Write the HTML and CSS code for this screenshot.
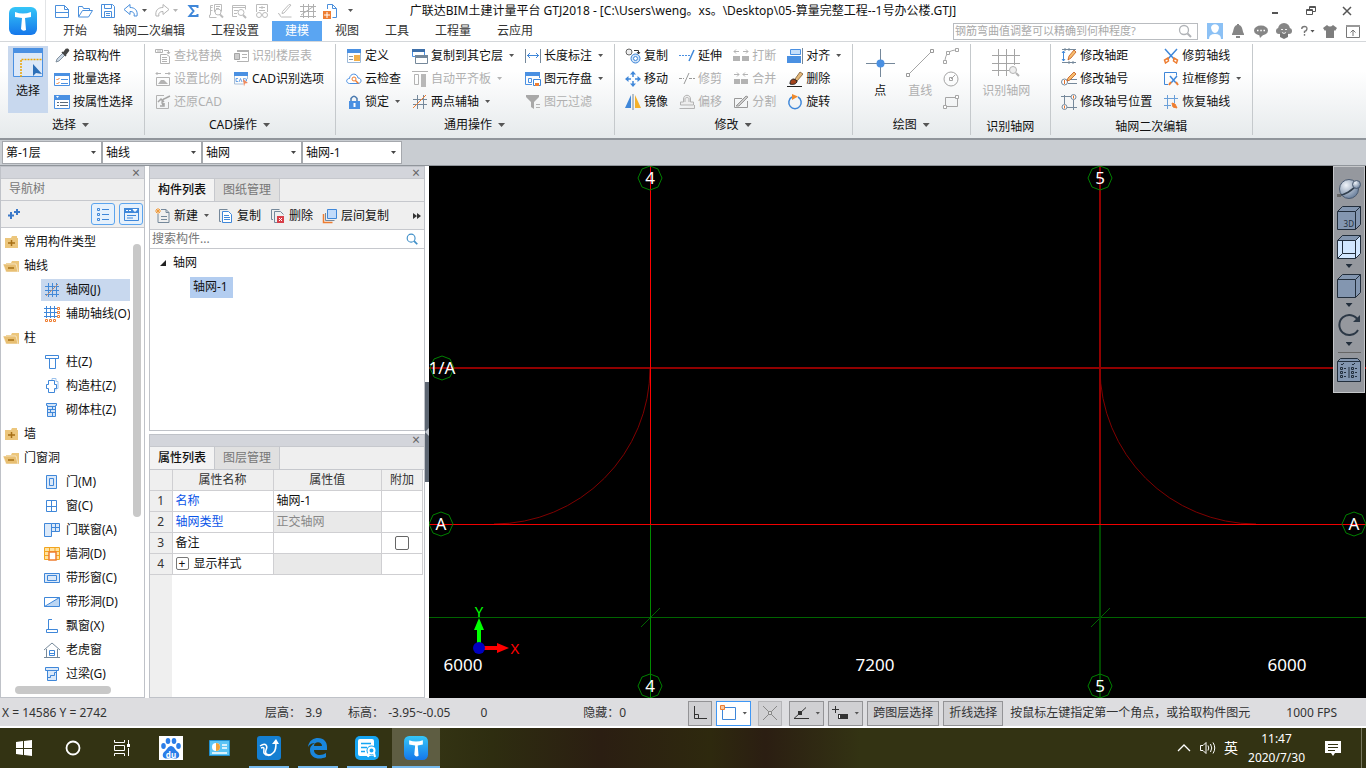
FILE: index.html
```html
<!DOCTYPE html>
<html lang="zh-CN">

<head>
    <meta charset="UTF-8" />
    <meta name="viewport" content="width=device-width, initial-scale=1.0" />
    <title>广联达BIM土建计量平台 GTJ2018</title>
    <link rel="stylesheet" href="styles.css">
</head>

<body>
    <!-- Icon sprite -->
    <svg class="sprite" aria-hidden="true">
        <defs>
            <linearGradient id="logo-fill" x1="0" y1="0" x2="0" y2="1">
                <stop offset="0" stop-color="#35c6f8" />
                <stop offset="1" stop-color="#1577ea" />
            </linearGradient>
            <radialGradient id="ball-fill" cx="0.35" cy="0.3" r="0.8">
                <stop offset="0" stop-color="#f0f4f9" />
                <stop offset="1" stop-color="#5d7493" />
            </radialGradient>
        </defs>
        <!-- quick access -->
        <symbol id="i-new" viewBox="0 0 16 16"><path d="M1.5 2.5h9l4 4v8h-13zM10.5 2.5v4h4M1.5 9.500h13" fill="none" stroke="#4a8fdc" /></symbol>
        <symbol id="i-open" viewBox="0 0 16 16"><path d="M1.5 13.5v-10h4l1 2h6v2M1.5 14l4-6.5h10l-4 6.5z" fill="none" stroke="#4a8fdc" /></symbol>
        <symbol id="i-save" viewBox="0 0 16 16"><path d="M1.5 1.5h11l2 2v11h-13zM4.5 1.5v4h7v-4M4.5 14.5v-6h7v6M6 10.5h4M6 12.5h4" fill="none" stroke="#4a8fdc" /></symbol>
        <symbol id="i-undo" viewBox="0 0 16 16"><path d="M1 6.5l6-5v3c5 0 8 3 7 8.5h-3c1-3-1-4.500-4-4.500v3z" fill="none" stroke="#4a8fdc" /></symbol>
        <symbol id="i-redo" viewBox="0 0 16 16"><path d="M15 6.5l-6-5v3c-5 0-8 3-7 8.5h3c-1-3 1-4.500 4-4.500v3z" fill="none" stroke="#b5b5b5" /></symbol>
        <symbol id="i-sum" viewBox="0 0 16 16"><path d="M12.500 5V3h-8l4 5-4 5h8v-2" fill="none" stroke="#3f87d9" stroke-width="2" /></symbol>
        <symbol id="i-sheet" viewBox="0 0 16 16"><path d="M5 2.500H2.500v9.500h-1v2.500h7M2.500 4.500h2M2.500 7.500h2M6.500 9v-7.500h7v7M8 3.500h4M8 5.500h3" fill="none" stroke="#bcbcbc" /><circle cx="10" cy="9" r="3" fill="none" stroke="#bcbcbc" /><path d="M12 11.500l3 3" stroke="#bcbcbc" stroke-width="2" /></symbol>
        <symbol id="i-find" viewBox="0 0 16 16"><path d="M6 13.500h-4.500v-11h13v4M1.500 4.500h13M3 7.500h4M3 10.500h3" fill="none" stroke="#bcbcbc" /><circle cx="10" cy="9.500" r="3" fill="none" stroke="#bcbcbc" /><path d="M12 12l3 3" stroke="#bcbcbc" stroke-width="2" /></symbol>
        <symbol id="i-glasses" viewBox="0 0 16 16"><path d="M2.500 9v-7.500h11v7.500M5 4.500h6M8 3v3M5 7.500h6" fill="none" stroke="#bcbcbc" /><circle cx="5" cy="12" r="2.500" fill="none" stroke="#bcbcbc" /><circle cx="11" cy="12" r="2.500" fill="none" stroke="#bcbcbc" /></symbol>
        <symbol id="i-brush" viewBox="0 0 16 16"><path d="M14 2l-7 8-2 .5.500-2L12 1.500zM1 10.500c3 0 1 3 3.500 3.500h10" fill="none" stroke="#bcbcbc" /></symbol>
        <symbol id="i-mesh" viewBox="0 0 16 16"><path d="M3.500 1v14M8.500 1v14M13.500 1v14M0 3.500h16M0 8.500h16M0 13.500h16M1 12l13-9" fill="none" stroke="#b0b0b0" /></symbol>
        <symbol id="i-export" viewBox="0 0 16 16"><path d="M4.500 6v-4.500h5l4 4v9h-4M9.500 1.500v4h4" fill="none" stroke="#4a8fdc" /><path d="M0 8h8v8H0z" fill="#ee7d31" /><path d="M4 9v6M1 12h6" stroke="#fff" /></symbol>
        <!-- ribbon: select -->
        <symbol id="i-select" viewBox="0 0 30 30"><path d="M.5.5h29v28H.5z" fill="#dce8f8" stroke="#4a90e2" /><path d="M0 0h30v5H0z" fill="#4a90e2" /><path d="M8 29V11.500h21" fill="none" stroke="#eba400" stroke-width="1.500" stroke-dasharray="2 1" /><path d="M20 16v12l3-3 6 1z" fill="#2d6fb8" /></symbol>
        <symbol id="i-pick" viewBox="0 0 16 16"><path d="M2 14l1-3 6-6 2 2-6 6z" fill="#cbd8e6" stroke="#6b7b8a" stroke-width=".8" /><path d="M8 4l4 4M9.500 5L12 1.500q2-1 2.500 1l-3 4z" fill="#444" stroke="#444" stroke-width="1.500" /></symbol>
        <symbol id="i-batch" viewBox="0 0 16 16"><path d="M.5 2.500h15v12H.5z" fill="#fff" stroke="#4a90e2" /><path d="M0 2h16v3H0z" fill="#4a90e2" /><path d="M2.500 8l1 1 2-2M2.500 12l1 1 2-2" fill="none" stroke="#ee7d31" /><path d="M7 8.500h7M7 12.500h7" stroke="#4a90e2" /></symbol>
        <symbol id="i-prop" viewBox="0 0 16 16"><path d="M.5 1.500h15v13H.5z" fill="#fff" stroke="#4a90e2" /><path d="M0 1h16v5H0z" fill="#4a90e2" /><path d="M2 2h3L3.500 4z" fill="#fff" /><path d="M3 8.500h2M3 11.500h2M6 8.500h8M6 11.500h8" stroke="#5b6b7a" /></symbol>
        <!-- ribbon: CAD -->
        <symbol id="i-replace" viewBox="0 0 16 16"><path d="M.5 1.500h7v3h-7zM3 2v2M5 2v2M9 2.500h4.500v3M12 4l1.500 2L15 4M5.500 6.500h6l3 2v7h-9zM7 9.500h5M7 11.500h5M7 13.500h5" fill="none" stroke="#b3b3b3" /></symbol>
        <symbol id="i-scale" viewBox="0 0 16 16"><path d="M1 2.500h5M10 2.500h5M2.500 1L1 2.500 2.500 4M13.500 1L15 2.500 13.500 4M1.500 6.500h13v8h-13z" fill="none" stroke="#b3b3b3" /><path d="M3 13l3-4h3l4 4z" fill="#b3b3b3" /></symbol>
        <symbol id="i-restore-cad" viewBox="0 0 16 16"><path d="M9 1.500H1.500v13h12V8" fill="none" stroke="#b3b3b3" /><path d="M15 2l-4 2c-4 1-5 4-3 7M3 8l3-3 3 3M9 9v3H5" fill="none" stroke="#a5a5a5" stroke-width="1.500" /></symbol>
        <symbol id="i-floors" viewBox="0 0 16 16"><path d="M4 2.500h11.500v11H4M9 6.500h5M9 9.500h5" fill="none" stroke="#b3b3b3" /><path d="M4 2h12v2H4z" fill="#b3b3b3" /><path d="M1.500 5.500h5v6h-5z" fill="#ccc" stroke="#a5a5a5" /></symbol>
        <symbol id="i-cad" viewBox="0 0 16 16"><path d="M1 1h14v4H1z" fill="#4a90e2" /><path d="M1.500 5v8h9M14.500 5v3" fill="none" stroke="#a9bfd8" /><path d="M5 7.500H3v3h2M6 11l1.500-3.500L9 11M10.500 7.500v3l3-.5v-2z" fill="none" stroke="#4a90e2" stroke-width=".8" /><path d="M10 8l5 4-3 .5-1 3z" fill="#f08a5d" /></symbol>
        <!-- ribbon: common -->
        <symbol id="i-define" viewBox="0 0 16 16"><path d="M1.500 1.500h13v13h-13z" fill="#fff" stroke="#9bb8d8" /><path d="M1 1h14v4H1z" fill="#4a90e2" /><path d="M3 8.500h4M3 11.500h4" stroke="#8898a8" /><path d="M8 7h6v6H8z" fill="#f2b04c" /></symbol>
        <symbol id="i-cloud" viewBox="0 0 16 16"><path d="M3.500 12.500c-4-.5-3.500-5 0-5C4 2 11 1.500 12 7c4 0 4 5.500 0 5.500z" fill="#fff" stroke="#4a90e2" /><circle cx="8" cy="8" r="2" fill="none" stroke="#ee7d31" /><path d="M9.500 9.500l3 3" stroke="#ee7d31" stroke-width="1.500" /></symbol>
        <symbol id="i-lock" viewBox="0 0 16 16"><path d="M5 8V4.500q3-4.500 6 0V8" fill="none" stroke="#4a7ab0" stroke-width="1.500" /><path d="M3 7h11v8H3z" fill="#4a90e2" /><path d="M8.500 9v4" stroke="#fff" stroke-width="2" /></symbol>
        <symbol id="i-copy-floor" viewBox="0 0 16 16"><path d="M.5 1.500h12v7h-12z" fill="#fff" stroke="#4a90e2" /><path d="M0 1h13v3H0z" fill="#3e6fa8" /><path d="M3.500 7.500h12v8h-12z" fill="#fff" stroke="#75889a" /><path d="M3 7h13v3H3z" fill="#75889a" /></symbol>
        <symbol id="i-align-slab" viewBox="0 0 16 16"><path d="M0 .5h16M2.500 3.500h4v10h-4z" fill="none" stroke="#b3b3b3" /><path d="M9 3h5v13H9z" fill="#b8b8b8" /></symbol>
        <symbol id="i-axis" viewBox="0 0 16 16"><path d="M5.500 1v14M11.500 1v14M1 5.500h14M1 10.500h14" stroke="#75889a" /><path d="M1 14L14 1" stroke="#ee7d31" /></symbol>
        <symbol id="i-length" viewBox="0 0 16 16"><path d="M.5 1v14M15.500 1v14" stroke="#75889a" /><path d="M2 7.500h12M5 5L2.500 7.500 5 10M11 5l2.500 2.500L11 10" fill="none" stroke="#3f87d9" /></symbol>
        <symbol id="i-disk" viewBox="0 0 16 16"><path d="M7 13.500H.5v-12h14V7M3.500 7.500h3v4h-3z" fill="none" stroke="#4a90e2" /><path d="M0 1h15v4H0z" fill="#4a90e2" /><path d="M8.500 8.500h7v6h-7z" fill="#fff" stroke="#3f87d9" /><path d="M10 12h4v3h-4z" fill="#ee7d31" /></symbol>
        <symbol id="i-filter" viewBox="0 0 16 16"><path d="M1 1h13v2L9 8v7l-3-2V8L1 3z" fill="#a8a8a8" /><path d="M11 10.500h4M11 13.500h4" stroke="#b3b3b3" /></symbol>
        <!-- ribbon: modify -->
        <symbol id="i-copy2" viewBox="0 0 16 16"><circle cx="4" cy="4" r="3" fill="#eee" stroke="#666" /><circle cx="10.500" cy="10.500" r="4.500" fill="#cfe2f7" stroke="#3f87d9" /><circle cx="10.500" cy="10.500" r="2" fill="#fff" stroke="#3f87d9" /><path d="M9 2.500h4.500V6M12 4l1.500 2L15 4" fill="none" stroke="#333" /></symbol>
        <symbol id="i-move" viewBox="0 0 16 16"><path d="M8 2v4M8 10v4M2 8h4M10 8h4" stroke="#3f87d9" stroke-width="1.500" /><path d="M8 0l3 3.500H5zM8 16l3-3.500H5zM0 8l3.500-3v6zM16 8l-3.500-3v6z" fill="#3f87d9" /></symbol>
        <symbol id="i-mirror" viewBox="0 0 16 16"><path d="M6 1v13H0z" fill="#3f87d9" /><path d="M10 1v13h6z" fill="#f5b12a" /><path d="M8 0v16" stroke="#75889a" /></symbol>
        <symbol id="i-extend" viewBox="0 0 16 16"><path d="M0 7.500h11" stroke="#4a90e2" stroke-dasharray="2 1" /><path d="M15 2l-5 11" stroke="#3f87d9" stroke-width="1.500" /></symbol>
        <symbol id="i-trim" viewBox="0 0 16 16"><path d="M0 7.500h5M10 7.500h6" stroke="#999" stroke-dasharray="3 1" /><path d="M10 2L5 13" stroke="#999" /></symbol>
        <symbol id="i-offset" viewBox="0 0 16 16"><path d="M1.500 11V8h3V5c0-5 7-5 7 0v3h3v3zM.5 14.500h15V11M6 8V5c0-2 4-2 4 0v3" fill="#eee" stroke="#b3b3b3" /></symbol>
        <symbol id="i-break" viewBox="0 0 16 16"><path d="M0 8h7v5H0zM9 8h7v5H9z" fill="#b3b3b3" /><path d="M1 3.500h5M10 3.500h5M3 1.500l-2 2 2 2M13 1.500l2 2-2 2" fill="none" stroke="#b3b3b3" /></symbol>
        <symbol id="i-join" viewBox="0 0 16 16"><path d="M1 8h6v5H1zM8 8h7v5H8z" fill="#b3b3b3" /><path d="M1 3.500h5M10 3.500h5M4 1.500l2 2-2 2M12 1.500l-2 2 2 2" fill="none" stroke="#b3b3b3" /></symbol>
        <symbol id="i-split" viewBox="0 0 16 16"><path d="M9 4.500H1.500v9h13V7" fill="none" stroke="#999" /><path d="M3 12l10-10 2 1-9 9z" fill="#ccc" stroke="#999" /></symbol>
        <symbol id="i-align" viewBox="0 0 16 16"><path d="M3.500 1.500h10v5h-10z" fill="#c5defa" stroke="#4a90e2" /><path d="M0 8h14v7H0z" fill="#4a90e2" /><path d="M15.500 0v16" stroke="#75889a" /></symbol>
        <symbol id="i-delete" viewBox="0 0 16 16"><path d="M8 8l5-7 3 2-6 7z" fill="#e5b878" stroke="#7a5a35" stroke-width=".8" /><path d="M3 13c0-4 2-5 4-5l3 2c0 3-4 4-7 3z" fill="#a4441c" stroke="#222" /><path d="M0 15.500h15" stroke="#222" /></symbol>
        <symbol id="i-rotate" viewBox="0 0 16 16"><path d="M11 3a6.200 6.200 0 1 1-6 0" fill="none" stroke="#3f87d9" stroke-width="1.500" /><path d="M5 0l6 2.500L5 6z" fill="#ee8a2d" /></symbol>
        <!-- ribbon: draw -->
        <symbol id="i-point" viewBox="0 0 30 30"><path d="M15.500 1v28M1 15.500h29" stroke="#75889a" /><circle cx="15.500" cy="15.500" r="4" fill="#4a90e2" /></symbol>
        <symbol id="i-line" viewBox="0 0 30 30"><path d="M4 26L26 4" stroke="#a5a5a5" /><path d="M1.500 25.500h3v3h-3zM25.500 1.500h3v3h-3z" fill="#fff" stroke="#999" /></symbol>
        <symbol id="i-arc" viewBox="0 0 16 16"><path d="M2 14C2 6 6 2 14 2" fill="none" stroke="#a5a5a5" /><path d="M.5 12.500h3v3h-3zM3.500 3.500h3v3h-3zM12.500.5h3v3h-3z" fill="#fff" stroke="#a5a5a5" /></symbol>
        <symbol id="i-circle" viewBox="0 0 16 16"><circle cx="8" cy="8" r="7" fill="none" stroke="#a5a5a5" /><path d="M8 8l4-4M6.500 6.500h3v3h-3z" fill="#fff" stroke="#a5a5a5" /></symbol>
        <symbol id="i-rect" viewBox="0 0 16 16"><path d="M2.500 3.500h12v9h-12z" fill="none" stroke="#a5a5a5" /><path d="M.5 11.500h3v3h-3zM12.500 1.500h3v3h-3z" fill="#fff" stroke="#a5a5a5" /></symbol>
        <symbol id="i-grid-find" viewBox="0 0 30 30"><path d="M7.500 1v27M15.500 1v27M23.500 1v16M1 7.500h28M1 15.500h28M1 22.500h17" stroke="#a5a5a5" /><circle cx="22" cy="22" r="3.500" fill="#eee" stroke="#b3b3b3" /><path d="M25 25l3 3" stroke="#b3b3b3" stroke-width="2" /></symbol>
        <!-- ribbon: axis edit -->
        <symbol id="i-ax-dist" viewBox="0 0 16 16"><path d="M1 1.500h14M4 0v3M8 0v3M1 14.500h14M8 13v3M12 13v3" stroke="#75889a" /><path d="M2.500 3v10M1 5l1.500-2L4 5M1 11l1.500 2L4 11" fill="none" stroke="#3f87d9" /><path d="M7 12l1-4 5-6 2 2-5 6z" fill="#f7bd6d" stroke="#c2571a" stroke-width=".8" /></symbol>
        <symbol id="i-ax-no" viewBox="0 0 16 16"><circle cx="3.500" cy="11" r="3" fill="#fff" stroke="#75889a" /><path d="M7 8.500h9M7 12.500h9" stroke="#75889a" /><path d="M3.500 9v4" stroke="#e2702c" /><path d="M6 10l1-3 6-6 2 2-6 6z" fill="#f7bd6d" stroke="#c2571a" stroke-width=".8" /></symbol>
        <symbol id="i-ax-pos" viewBox="0 0 16 16"><path d="M3.500 1v9M0 2.500h10M12.500 6v10M6 13.500h10" stroke="#75889a" /><circle cx="12.500" cy="3" r="2.500" fill="#fff" stroke="#75889a" /><circle cx="3.500" cy="13" r="2.500" fill="#fff" stroke="#75889a" /><path d="M12.500 1.500v3M3.500 11.500v3" stroke="#e2702c" /></symbol>
        <symbol id="i-cut" viewBox="0 0 16 16"><path d="M2 1l9 10M14 1L5 11" stroke="#3f87d9" stroke-width="1.500" /><path d="M5 10l-3.500 2 1 3 3-2zM11 10l3.500 2-1 3-3-2z" fill="#fff" stroke="#ee7d31" stroke-width="1.500" /></symbol>
        <symbol id="i-box-cut" viewBox="0 0 16 16"><path d="M5 13.500H1.500v-12h12v3" fill="none" stroke="#3f87d9" /><path d="M7 5l6 7M14 5l-6 7" stroke="#3f87d9" stroke-width="1.500" /><path d="M8 11l-2 3M13 11l2 3" stroke="#ee7d31" stroke-width="2" /></symbol>
        <symbol id="i-ax-back" viewBox="0 0 16 16"><path d="M4.500 1v14M11.500 1v8M1 4.500h14M1 11.500h7" stroke="#6a9fd8" /><path d="M9 9l3 1 2 4-4-1z" fill="#ee7d31" stroke="#ee7d31" /></symbol>
        <!-- header right -->
        <symbol id="i-search" viewBox="0 0 16 16"><circle cx="7" cy="7" r="4.500" fill="none" stroke="currentColor" stroke-width="1.300" /><path d="M10.500 10.500L14 14" stroke="currentColor" stroke-width="2" /></symbol>
        <symbol id="i-avatar" viewBox="0 0 16 16"><path d="M0 0h16v16H0z" fill="#8cc1f5" /><path d="M4 5c0-5 8-5 8 0l-1 3q-3 4-6 0zM2 16q0-5 6-5t6 5z" fill="#fff" /></symbol>
        <symbol id="i-bell" viewBox="0 0 16 16"><path d="M7 1h2v1c4 1 3 6 5 9v1H2v-1c2-3 1-8 5-9zM6 13h4v2H6z" fill="#868686" /></symbol>
        <symbol id="i-chat" viewBox="0 0 16 16"><ellipse cx="8" cy="7.500" rx="7" ry="5" fill="#868686" /><path d="M6 11l1 4 4-4z" fill="#868686" /><path d="M4 7.500h1.500M7.300 7.500h1.500M10.500 7.500H12" stroke="#fff" stroke-width="1.500" /></symbol>
        <symbol id="i-face" viewBox="0 0 16 16"><circle cx="8" cy="6" r="6" fill="#868686" /><circle cx="3" cy="8" r="3" fill="#868686" /><circle cx="13" cy="8" r="3" fill="#868686" /><path d="M4 10h8v4l-4 2-4-2z" fill="#777" /><path d="M5 6.500h2M9 6.500h2M6 9.500q2 2 4 0" fill="none" stroke="#eee" /></symbol>
        <symbol id="i-help" viewBox="0 0 16 16"><path d="M4 5q0-3.500 4-3.500t3.500 3.500T8 8.500V11M8 12.500V15" fill="none" stroke="#777" stroke-width="2" /></symbol>
        <symbol id="i-shirt" viewBox="0 0 16 16"><path d="M5 2q3 3 6 0l4 3-2 3-1-1v8H4V7L3 8 1 5z" fill="#7e7e7e" /></symbol>
        <symbol id="i-pin" viewBox="0 0 16 16"><path d="M1.500 2.500h13v12h-13z" fill="none" stroke="#777" /><path d="M1 2h14v2H1z" fill="#999" /><path d="M8 13V7M5.500 9.500L8 7l2.500 2.500" fill="none" stroke="#777" /></symbol>
        <!-- tree -->
        <symbol id="i-folder" viewBox="0 0 16 16"><path d="M2 4h6l1-2h5v2h1v10H2z" fill="#ecc67c" /><path d="M8.500 6v6M5 9h7" stroke="#a66f16" stroke-width="1.500" /></symbol>
        <symbol id="i-folder-open" viewBox="0 0 16 16"><path d="M3 5h5l1-2h7v11H3z" fill="#ecc67c" /><path d="M0 6h13l2 8H3z" fill="#e8bf72" stroke="#fff" stroke-width=".5" /><path d="M5 10h6" stroke="#a66f16" stroke-width="1.500" /></symbol>
        <symbol id="i-grid" viewBox="0 0 16 16"><path d="M4.500 1v14M8.500 1v14M12.500 1v14M1 4.500h14M1 8.500h14M1 12.500h14" stroke="#4389d8" /><path d="M2 14L14 2" stroke="#b98a70" /></symbol>
        <symbol id="i-grid-aux" viewBox="0 0 16 16"><path d="M2.500 0v12M6.500 0v12M10.500 0v12M0 2.500h13M0 6.500h13M0 10.500h13" stroke="#3f87d9" /><path d="M1.500 13.500h2v2h-2zM5.500 13.500h2v2h-2zM9.500 13.500h2v2h-2zM13.500 1.500h2v2h-2zM13.500 5.500h2v2h-2zM13.500 9.500h2v2h-2z" fill="#fff" stroke="#ee7d31" /></symbol>
        <symbol id="i-column" viewBox="0 0 16 16"><path d="M1.500 1.500h13v3h-3v10h-6v-10h-4zM1.500 4.500h13" fill="#fff" stroke="#3f87d9" /></symbol>
        <symbol id="i-column-c" viewBox="0 0 16 16"><path d="M8 2V.5h4v3h2v7h-2v2" fill="none" stroke="#9cc2ec" /><path d="M4.500 2.500h6v4h2v4h-2v4h-6v-4h-2v-4h2z" fill="#fff" stroke="#3f87d9" /></symbol>
        <symbol id="i-column-b" viewBox="0 0 16 16"><path d="M2.500 1.500h10v2h-1v11h-8v-11h-1z" fill="#d5e5f8" stroke="#3f87d9" /><path d="M4 4.500h7M4 7.500h7M4 10.500h7M8.500 5v2M6.500 8v2M8.500 11v3" stroke="#3f87d9" /></symbol>
        <symbol id="i-door" viewBox="0 0 16 16"><path d="M2.500 1.500h10v13h-10zM5.500 4.500h4v7h-4z" fill="#dbe9f9" stroke="#3f87d9" /></symbol>
        <symbol id="i-window" viewBox="0 0 16 16"><path d="M2.500 2.500h10v11h-10zM7.500 2.500v11M2.500 8.500h10" fill="#fff" stroke="#3f87d9" /></symbol>
        <symbol id="i-door-win" viewBox="0 0 16 16"><path d="M.5 1.500h7v13h-7zM7.500 1.500h8v8h-8M11.500 1.500v8M7.500 5.500h8" fill="#dbe9f9" stroke="#3f87d9" /></symbol>
        <symbol id="i-hole" viewBox="0 0 16 16"><path d="M.5 1.500h15v12H.5z" fill="#ffe2a0" stroke="#f2a51f" /><path d="M0 5.500h16M5.500 1v4M11 1v4M0 9.500h5M11 9.500h5" stroke="#f2a51f" /><path d="M5 6h7v8H5z" fill="#fff" stroke="#ee7d31" stroke-width="1.500" /></symbol>
        <symbol id="i-strip-win" viewBox="0 0 16 16"><path d="M.5 3.500h15v9H.5zM3.500 5.500h9v5h-9z" fill="#dbe9f9" stroke="#3f87d9" /></symbol>
        <symbol id="i-strip-hole" viewBox="0 0 16 16"><path d="M15 3v10H1z" fill="#bcd6f3" /><path d="M.5 3.500h15v9H.5zM.5 12.500l15-9" fill="none" stroke="#3f87d9" /></symbol>
        <symbol id="i-bay" viewBox="0 0 16 16"><path d="M8 1.500H4.500v10M2.500 11.500h11v3h-11z" fill="#fff" stroke="#3f87d9" /></symbol>
        <symbol id="i-dormer" viewBox="0 0 16 16"><path d="M0 8L8 1l8 7M2.500 7v8M13.500 7v8M0 15.500h16" fill="none" stroke="#75889a" /><path d="M5.500 8.500h5v5h-5zM5.500 11.500h5" fill="none" stroke="#3f87d9" /></symbol>
        <symbol id="i-lintel" viewBox="0 0 16 16"><path d="M1.500 1.500h13v3h-13zM3.500 4.500v10h9v-10M3.500 11.500h3v-2h4v-3h2" fill="#dbe9f9" stroke="#3f87d9" /></symbol>
        <!-- component panel -->
        <symbol id="i-add-item" viewBox="0 0 16 16"><path d="M6 1.500h5l3 3v10H3V6M11 1.500v3h3M6 8.500h6M6 11.500h6" fill="none" stroke="#75889a" /><path d="M3 0v6M0 3h6M1 1l4 4M5 1L1 5" stroke="#f09a3a" /></symbol>
        <symbol id="i-copy-item" viewBox="0 0 16 16"><path d="M3 13.500H1.500v-12h8" fill="none" stroke="#75889a" /><path d="M4.500 3.500h6l3 3v8h-9zM6 7.500h5M6 9.500h6M6 11.500h6" fill="#fff" stroke="#3f87d9" /></symbol>
        <symbol id="i-del-item" viewBox="0 0 16 16"><path d="M3 11.500H1.500v-10h8M7 14.500H4.500v-11h6l3 3" fill="none" stroke="#75889a" /><path d="M7 8h7v7H7z" fill="#d8404a" /><path d="M9 10l3 3M12 10l-3 3" stroke="#fff" /></symbol>
        <symbol id="i-layer-copy" viewBox="0 0 16 16"><path d="M1.500 6v8.500h9" fill="none" stroke="#ee7d31" stroke-width="1.500" /><path d="M3.500 5v7.500h9" fill="none" stroke="#75889a" /><path d="M5.500 1.500h9v9h-9z" fill="#c2dbfa" stroke="#3f87d9" /></symbol>
        <symbol id="i-plus2" viewBox="0 0 16 16"><path d="M5 6v7M2 9.500h6M11 3v6M8 6h6" stroke="#3a78c8" stroke-width="2" /></symbol>
        <symbol id="i-view-list" viewBox="0 0 16 16"><path d="M2.500 2.500h2v2h-2zM2.500 7.500h2v2h-2zM2.500 12.500h2v2h-2zM7 3.500h7M7 8.500h7M7 13.500h7" fill="none" stroke="#3f87d9" /></symbol>
        <symbol id="i-view-card" viewBox="0 0 16 16"><path d="M1.500 2.500h14v12h-14zM4 9.500h9M4 12h6" fill="none" stroke="#3f87d9" /><path d="M1 2h15v5H1z" fill="#3f87d9" /><path d="M3 4.500h2M6 4.500h2M10 3.500h4l-2 2z" stroke="#fff" fill="#fff" /></symbol>
        <!-- view cube -->
        <symbol id="i-orbit" viewBox="0 0 24 24"><circle cx="12" cy="12" r="9.500" fill="url(#ball-fill)" stroke="#4a5a70" /><path d="M1 18c5 1 15-4 21-13" fill="none" stroke="#33404f" stroke-width="1.500" /><circle cx="19.500" cy="7.500" r="4" fill="url(#ball-fill)" stroke="#4a5a70" /><path d="M0 17h4v3H0z" fill="#666" /></symbol>
        <symbol id="i-cube" viewBox="0 0 24 24"><path d="M.5 5.500l5-5h18v18l-5 5H.5zM.5 5.500h18v18M18.500 5.500l5-5" fill="#8396b0" stroke="#222e3c" /></symbol>
        <symbol id="i-cube-wire" viewBox="0 0 24 24"><path d="M.5 5.500l5-5h18v18l-5 5H.5z" fill="#d2e7ff" stroke="#222e3c" /><path d="M.5 5.500l5-5h18l-5 5z" fill="#8396b0" stroke="#222e3c" /><path d="M18.500 5.500v18M5.500 5.500v13h13M5.500 18.500l-5 5" fill="none" stroke="#222e3c" /></symbol>
        <symbol id="i-spin" viewBox="0 0 24 24"><path d="M21 17a10 10 0 1 1 0-10" fill="none" stroke="#2c3846" stroke-width="2" /><path d="M23 2v7h-7z" fill="#2c3846" /></symbol>
        <symbol id="i-options" viewBox="0 0 24 24"><path d="M.5 3.500l3-3h17l3 3v20H.5zM.5 3.500h23M12 9v11" fill="#8396b0" stroke="#222e3c" /><path d="M4 6l1 1 2-2M15 6l1 1 2-2M3.500 9.500h2v2h-2zM3.500 13.500h2v2h-2zM3.500 17.500h2v2h-2zM14.500 9.500h2v2h-2zM14.500 13.500h2v2h-2zM14.500 17.500h2v2h-2zM7 10.500h2M7 14.500h2M7 18.500h2M18 10.500h2M18 14.500h2M18 18.500h2" fill="none" stroke="#222e3c" /></symbol>
        <!-- status bar -->
        <symbol id="i-ortho" viewBox="0 0 16 16"><path d="M2.500 1v12.500H15M2.500 9.500h4v4" fill="none" stroke="#333" /></symbol>
        <symbol id="i-snap-rect" viewBox="0 0 16 16"><path d="M2.500 2.500h13v12h-13z" fill="none" stroke="#3f87d9" /><path d="M.5.5h4v4h-4z" fill="#f9c79c" stroke="#ee7d31" /></symbol>
        <symbol id="i-cross" viewBox="0 0 16 16"><path d="M1 1l14 14M15 1L1 15" stroke="#888" /><path d="M6.500 6.500h3v3h-3z" fill="#ddd" stroke="#888" /></symbol>
        <symbol id="i-angle" viewBox="0 0 16 16"><path d="M1 13.500h15M1 13.500L13 2.500" stroke="#333" /><path d="M5 6h4v4H5z" fill="#333" /></symbol>
        <symbol id="i-input" viewBox="0 0 16 16"><path d="M3.500 1v7M0 4.500h7" stroke="#333" /><path d="M6 9h10v5H6z" fill="#333" /><path d="M7.500 10v3" stroke="#fff" /></symbol>
        <!-- taskbar -->
        <symbol id="i-win" viewBox="0 0 16 16"><path d="M0 2l7-1v7H0zM8 1l8-1v8H8zM0 9h7v6l-7-1zM8 9h8v7l-8-1z" fill="#fff" /></symbol>
        <symbol id="i-cortana" viewBox="0 0 16 16"><circle cx="8" cy="8" r="6.500" fill="none" stroke="#fff" stroke-width="1.800" /></symbol>
        <symbol id="i-taskview" viewBox="0 0 16 16"><path d="M.5 0v2.500h10V0M.5 16v-2.500h10V16M.5 5.500h10v5H.5zM14.500 0v4M14.500 8v8" fill="none" stroke="#fff" /><path d="M13 4h3v3h-3z" fill="#fff" /></symbol>
        <symbol id="i-baidu" viewBox="0 0 24 24"><path d="M0 0h24v24H0z" fill="#fff" /><ellipse cx="4.500" cy="10" rx="2.300" ry="3" fill="#2a7de8" /><ellipse cx="9" cy="5" rx="2.300" ry="3" fill="#2a7de8" /><ellipse cx="15" cy="5" rx="2.300" ry="3" fill="#2a7de8" /><ellipse cx="19.500" cy="10" rx="2.300" ry="3" fill="#2a7de8" /><path d="M12 10c3 0 4 4 7 6 3 4 0 7-3 6.500q-4-1-8 0C5 23 2 20 5 16c3-2 4-6 7-6z" fill="#2a7de8" /></symbol>
        <symbol id="i-card" viewBox="0 0 24 24"><path d="M1.500 4.500h20v15h-20z" fill="#5cc4f5" stroke="#1f8fd0" /><circle cx="8" cy="11" r="4" fill="#fff" /><path d="M8 11V7a4 4 0 0 1 0 8z" fill="#f0a33a" /><path d="M14 9h5M14 12h5M4 17h15" stroke="#fff" stroke-width="1.500" /></symbol>
        <symbol id="i-swirl" viewBox="0 0 24 24"><rect width="24" height="24" rx="3" fill="#147fd2" /><path d="M3 10c6-4 8 0 6 4-2 5 4 6 7 3 3-2 3-6 3-11M4 12c5-2 2 3 3 5 2 3 6 3 8 1" fill="none" stroke="#fff" stroke-width="1.500" /><path d="M15 8l4-5 3 5z" fill="#fff" /></symbol>
        <symbol id="i-edge" viewBox="0 0 24 24"><path d="M2 11C3 4 8 2 12 2c6 0 9 4 9 9v3H8c0 6 8 6 12 3v4C14 24 4 23 4 14c0-4 3-6 5-7-5 0-6 3-7 4zm6-1h8c0-5-8-5-8 0z" fill="#1a86dc" /></symbol>
        <symbol id="i-cert" viewBox="0 0 24 24"><rect width="24" height="24" rx="5" fill="#16a5f3" /><rect x="3" y="3" width="16" height="17" rx="2" fill="#fff" /><path d="M6 7.500h10M6 11.500h6M6 15.500h4" stroke="#16a5f3" stroke-width="1.500" /><circle cx="16.500" cy="14.500" r="5" fill="#16a5f3" /><circle cx="16.500" cy="14.500" r="3" fill="none" stroke="#fff" stroke-width="2" /><path d="M14 17l-1 4M19 17l1 4" stroke="#fff" stroke-width="2" /></symbol>
        <symbol id="i-logo" viewBox="0 0 28 28"><rect width="28" height="28" rx="6" fill="url(#logo-fill)" /><path d="M6 5q8 3 16 0v5l-6 1 1 12q-3 2-5-1l1-11-7-1z" fill="#fff" /></symbol>
        <symbol id="i-up" viewBox="0 0 16 16"><path d="M2 11l6-6 6 6" fill="none" stroke="#fff" stroke-width="1.300" /></symbol>
        <symbol id="i-sound" viewBox="0 0 16 16"><path d="M.5 5.500H3l3-3v11l-3-3H.5zM8 5.500q1.500 2.500 0 5M10.500 4q2.500 4 0 8M13 2.500q3.500 5.500 0 11" fill="none" stroke="#fff" /></symbol>
        <symbol id="i-note" viewBox="0 0 16 16"><path d="M0 1h16v12h-6l-2 3-2-3H0z" fill="#fff" /><path d="M3 4.500h10M3 7.500h10M3 10.500h7" stroke="#333313" /></symbol>
    </svg>

    <header class="header">
        <div class="titlebar">
            <div class="quick">
                <button title="新建"><svg class="ico"><use href="#i-new" /></svg></button>
                <button title="打开"><svg class="ico"><use href="#i-open" /></svg></button>
                <button title="保存"><svg class="ico"><use href="#i-save" /></svg></button>
                <button title="撤销"><svg class="ico"><use href="#i-undo" /></svg><i class="arrow"></i></button>
                <button title="恢复" class="off"><svg class="ico"><use href="#i-redo" /></svg><i class="arrow"></i></button>
                <button title="汇总计算"><svg class="ico"><use href="#i-sum" /></svg></button>
                <button title="查看工程量"><svg class="ico"><use href="#i-sheet" /></svg></button>
                <button title="查看计算式"><svg class="ico"><use href="#i-find" /></svg></button>
                <button title="查看报表"><svg class="ico"><use href="#i-glasses" /></svg></button>
                <button title="编辑"><svg class="ico"><use href="#i-brush" /></svg></button>
                <button title="钢筋三维"><svg class="ico"><use href="#i-mesh" /></svg></button>
                <button title="导出"><svg class="ico"><use href="#i-export" /></svg></button>
                <button title="自定义" class="customize"><i class="arrow"></i></button>
            </div>
            <h1>广联达BIM土建计量平台 GTJ2018 - [C:\Users\weng。xs。\Desktop\05-算量完整工程--1号办公楼.GTJ]</h1>
            <div class="win-btns">
                <button title="最小化"><svg viewBox="0 0 12 12"><path d="M3 8h6" stroke="#555" stroke-width="2" /></svg></button>
                <button title="还原"><svg viewBox="0 0 12 12"><path d="M1.500 4.500h6v5h-6zM4.500 4V1.500h6v5H8M1.500 5.500h6M4.500 2.500h6" fill="none" stroke="#555" /></svg></button>
                <button title="关闭"><svg viewBox="0 0 12 12"><path d="M2 2l8 8M10 2l-8 8" stroke="#555" stroke-width="1.500" /></svg></button>
            </div>
        </div>
        <button class="logo" title="菜单"><svg><use href="#i-logo" /></svg></button>
        <div class="tabbar">
            <nav class="tabs">
                <a href="#">开始</a>
                <a href="#">轴网二次编辑</a>
                <a href="#">工程设置</a>
                <a href="#" class="active">建模</a>
                <a href="#">视图</a>
                <a href="#">工具</a>
                <a href="#">工程量</a>
                <a href="#">云应用</a>
            </nav>
            <div class="help-search">
                <input type="text" aria-label="搜索帮助" placeholder="钢筋弯曲值调整可以精确到何种程度?">
                <svg class="ico"><use href="#i-search" /></svg>
            </div>
            <div class="user-btns">
                <button title="用户"><svg class="ico"><use href="#i-avatar" /></svg></button>
                <button title="通知"><svg class="ico"><use href="#i-bell" /></svg></button>
                <button title="消息"><svg class="ico"><use href="#i-chat" /></svg></button>
                <button title="客服"><svg class="ico"><use href="#i-face" /></svg></button>
                <button title="帮助" class="help"><svg class="ico"><use href="#i-help" /></svg><i class="arrow"></i></button>
                <button title="皮肤"><svg class="ico"><use href="#i-shirt" /></svg></button>
                <button title="折叠"><svg class="ico"><use href="#i-pin" /></svg></button>
            </div>
        </div>
    </header>

    <!-- Ribbon -->
    <div class="ribbon">
        <section class="group">
            <div class="cols">
                <button class="big active"><svg><use href="#i-select" /></svg>选择</button>
                <div class="col">
                    <button><svg class="ico"><use href="#i-pick" /></svg>拾取构件</button>
                    <button><svg class="ico"><use href="#i-batch" /></svg>批量选择</button>
                    <button><svg class="ico"><use href="#i-prop" /></svg>按属性选择</button>
                </div>
            </div>
            <button class="group-name">选择<i class="arrow wide"></i></button>
        </section>
        <section class="group">
            <div class="cols">
                <div class="col">
                    <button disabled><svg class="ico"><use href="#i-replace" /></svg>查找替换</button>
                    <button disabled><svg class="ico"><use href="#i-scale" /></svg>设置比例</button>
                    <button disabled><svg class="ico"><use href="#i-restore-cad" /></svg>还原CAD</button>
                </div>
                <div class="col">
                    <button disabled><svg class="ico"><use href="#i-floors" /></svg>识别楼层表</button>
                    <button><svg class="ico"><use href="#i-cad" /></svg>CAD识别选项</button>
                </div>
            </div>
            <button class="group-name">CAD操作<i class="arrow wide"></i></button>
        </section>
        <section class="group">
            <div class="cols">
                <div class="col">
                    <button><svg class="ico"><use href="#i-define" /></svg>定义</button>
                    <button><svg class="ico"><use href="#i-cloud" /></svg>云检查</button>
                    <button><svg class="ico"><use href="#i-lock" /></svg>锁定<i class="arrow"></i></button>
                </div>
                <div class="col">
                    <button><svg class="ico"><use href="#i-copy-floor" /></svg>复制到其它层<i class="arrow"></i></button>
                    <button disabled><svg class="ico"><use href="#i-align-slab" /></svg>自动平齐板<i class="arrow"></i></button>
                    <button><svg class="ico"><use href="#i-axis" /></svg>两点辅轴<i class="arrow"></i></button>
                </div>
                <div class="col">
                    <button><svg class="ico"><use href="#i-length" /></svg>长度标注<i class="arrow"></i></button>
                    <button><svg class="ico"><use href="#i-disk" /></svg>图元存盘<i class="arrow"></i></button>
                    <button disabled><svg class="ico"><use href="#i-filter" /></svg>图元过滤</button>
                </div>
            </div>
            <button class="group-name">通用操作<i class="arrow wide"></i></button>
        </section>
        <section class="group">
            <div class="cols">
                <div class="col">
                    <button><svg class="ico"><use href="#i-copy2" /></svg>复制</button>
                    <button><svg class="ico"><use href="#i-move" /></svg>移动</button>
                    <button><svg class="ico"><use href="#i-mirror" /></svg>镜像</button>
                </div>
                <div class="col">
                    <button><svg class="ico"><use href="#i-extend" /></svg>延伸</button>
                    <button disabled><svg class="ico"><use href="#i-trim" /></svg>修剪</button>
                    <button disabled><svg class="ico"><use href="#i-offset" /></svg>偏移</button>
                </div>
                <div class="col">
                    <button disabled><svg class="ico"><use href="#i-break" /></svg>打断</button>
                    <button disabled><svg class="ico"><use href="#i-join" /></svg>合并</button>
                    <button disabled><svg class="ico"><use href="#i-split" /></svg>分割</button>
                </div>
                <div class="col">
                    <button><svg class="ico"><use href="#i-align" /></svg>对齐<i class="arrow"></i></button>
                    <button><svg class="ico"><use href="#i-delete" /></svg>删除</button>
                    <button><svg class="ico"><use href="#i-rotate" /></svg>旋转</button>
                </div>
            </div>
            <button class="group-name">修改<i class="arrow wide"></i></button>
        </section>
        <section class="group">
            <div class="cols tight">
                <button class="big"><svg><use href="#i-point" /></svg>点</button>
                <button class="big" disabled><svg><use href="#i-line" /></svg>直线</button>
                <div class="col">
                    <button title="弧" disabled><svg class="ico"><use href="#i-arc" /></svg></button>
                    <button title="圆" disabled><svg class="ico"><use href="#i-circle" /></svg></button>
                    <button title="矩形" disabled><svg class="ico"><use href="#i-rect" /></svg></button>
                </div>
            </div>
            <button class="group-name">绘图<i class="arrow wide"></i></button>
        </section>
        <section class="group plain">
            <div class="cols">
                <button class="big long" disabled><svg><use href="#i-grid-find" /></svg>识别轴网</button>
            </div>
            <div class="group-name">识别轴网</div>
        </section>
        <section class="group plain">
            <div class="cols">
                <div class="col">
                    <button><svg class="ico"><use href="#i-ax-dist" /></svg>修改轴距</button>
                    <button><svg class="ico"><use href="#i-ax-no" /></svg>修改轴号</button>
                    <button><svg class="ico"><use href="#i-ax-pos" /></svg>修改轴号位置</button>
                </div>
                <div class="col">
                    <button><svg class="ico"><use href="#i-cut" /></svg>修剪轴线</button>
                    <button><svg class="ico"><use href="#i-box-cut" /></svg>拉框修剪<i class="arrow"></i></button>
                    <button><svg class="ico"><use href="#i-ax-back" /></svg>恢复轴线</button>
                </div>
            </div>
            <div class="group-name">轴网二次编辑</div>
        </section>
    </div>

    <div class="pickers">
        <select aria-label="楼层"><option>第-1层</option></select>
        <select aria-label="构件分类"><option>轴线</option></select>
        <select aria-label="构件类型"><option>轴网</option></select>
        <select aria-label="构件"><option>轴网-1</option></select>
    </div>

    <main class="workspace">
        <!-- Navigation tree -->
        <aside class="panel nav">
            <div class="strip"><button title="关闭">×</button></div>
            <h2>导航树</h2>
            <div class="nav-tools">
                <button title="展开"><svg class="ico"><use href="#i-plus2" /></svg></button>
                <button title="列表" class="boxed"><svg class="ico"><use href="#i-view-list" /></svg></button>
                <button title="卡片" class="boxed"><svg class="ico"><use href="#i-view-card" /></svg></button>
            </div>
            <div class="tree-wrap">
                <ul class="tree">
                    <li><svg class="ico"><use href="#i-folder" /></svg>常用构件类型</li>
                    <li><svg class="ico"><use href="#i-folder-open" /></svg>轴线</li>
                    <li class="leaf selected"><svg class="ico"><use href="#i-grid" /></svg>轴网(J)</li>
                    <li class="leaf"><svg class="ico"><use href="#i-grid-aux" /></svg>辅助轴线(O)</li>
                    <li><svg class="ico"><use href="#i-folder-open" /></svg>柱</li>
                    <li class="leaf"><svg class="ico"><use href="#i-column" /></svg>柱(Z)</li>
                    <li class="leaf"><svg class="ico"><use href="#i-column-c" /></svg>构造柱(Z)</li>
                    <li class="leaf"><svg class="ico"><use href="#i-column-b" /></svg>砌体柱(Z)</li>
                    <li><svg class="ico"><use href="#i-folder" /></svg>墙</li>
                    <li><svg class="ico"><use href="#i-folder-open" /></svg>门窗洞</li>
                    <li class="leaf"><svg class="ico"><use href="#i-door" /></svg>门(M)</li>
                    <li class="leaf"><svg class="ico"><use href="#i-window" /></svg>窗(C)</li>
                    <li class="leaf"><svg class="ico"><use href="#i-door-win" /></svg>门联窗(A)</li>
                    <li class="leaf"><svg class="ico"><use href="#i-hole" /></svg>墙洞(D)</li>
                    <li class="leaf"><svg class="ico"><use href="#i-strip-win" /></svg>带形窗(C)</li>
                    <li class="leaf"><svg class="ico"><use href="#i-strip-hole" /></svg>带形洞(D)</li>
                    <li class="leaf"><svg class="ico"><use href="#i-bay" /></svg>飘窗(X)</li>
                    <li class="leaf"><svg class="ico"><use href="#i-dormer" /></svg>老虎窗</li>
                    <li class="leaf"><svg class="ico"><use href="#i-lintel" /></svg>过梁(G)</li>
                </ul>
                <div class="vscroll"><i></i></div>
            </div>
            <div class="hscroll"><i></i></div>
        </aside>

        <div class="middle">
            <section class="panel components">
                <div class="strip"><button title="关闭">×</button></div>
                <div class="panel-tabs">
                    <button class="active">构件列表</button>
                    <button>图纸管理</button>
                </div>
                <div class="item-tools">
                    <button><svg class="ico"><use href="#i-add-item" /></svg>新建<i class="arrow"></i></button>
                    <button><svg class="ico"><use href="#i-copy-item" /></svg>复制</button>
                    <button><svg class="ico"><use href="#i-del-item" /></svg>删除</button>
                    <button><svg class="ico"><use href="#i-layer-copy" /></svg>层间复制</button>
                    <button class="more" title="更多"><svg viewBox="0 0 8 6"><path d="M0 0l4 3-4 3zM4 0l4 3-4 3z" fill="#333" /></svg></button>
                </div>
                <div class="item-search">
                    <input type="text" aria-label="搜索构件" placeholder="搜索构件...">
                    <svg class="ico"><use href="#i-search" /></svg>
                </div>
                <ul class="items">
                    <li><svg viewBox="0 0 6 6"><path d="M6 0v6H0z" fill="#222" /></svg>轴网</li>
                    <li class="child"><span>轴网-1</span></li>
                </ul>
            </section>

            <section class="panel props">
                <div class="strip"><button title="关闭">×</button></div>
                <div class="panel-tabs">
                    <button class="active">属性列表</button>
                    <button>图层管理</button>
                </div>
                <div class="prop-body">
                    <table>
                        <thead>
                            <tr><th class="num"></th><th class="name">属性名称</th><th>属性值</th><th class="extra">附加</th></tr>
                        </thead>
                        <tbody>
                            <tr><th class="num">1</th><td class="key">名称</td><td>轴网-1</td><td></td></tr>
                            <tr><th class="num">2</th><td class="key">轴网类型</td><td class="locked">正交轴网</td><td></td></tr>
                            <tr><th class="num">3</th><td>备注</td><td></td><td class="check"><input type="checkbox" aria-label="备注附加"></td></tr>
                            <tr><th class="num">4</th><td><button class="expand">+</button>显示样式</td><td class="locked"></td><td></td></tr>
                        </tbody>
                    </table>
                </div>
            </section>
        </div>

        <div class="splitter"><button title="折叠"><svg viewBox="0 0 4 8"><path d="M4 0v8L0 4z" fill="#c5cad2" /></svg></button></div>

        <!-- Drawing area -->
        <div class="canvas">
            <svg class="drawing" viewBox="429 166 937 532" preserveAspectRatio="xMidYMid slice">
                <g fill="none">
                    <path d="M494 524A156 156 0 0 0 650 368M1100 368A156 156 0 0 0 1256 524" stroke="#800000" />
                    <path d="M429 368H1366M1100 166V524" stroke="#900000" stroke-width="2" />
                    <path d="M429 524.500H1366" stroke="#f00000" />
                    <path d="M650.500 166V524" stroke="#ff0000" />
                    <path d="M429 617.500H1366M641 627l19-19M1091 627l19-19" stroke="#006400" />
                    <path d="M650.500 525V698" stroke="#008a00" />
                    <path d="M1100 525V698" stroke="#004a00" stroke-width="2" />
                </g>
                <g class="bubbles">
                    <path id="bubble" d="M650 166l8 3 4 9-4 9-8 3-8-3-4-9 4-9z" />
                    <use href="#bubble" x="450" />
                    <use href="#bubble" x="-208" y="190" />
                    <use href="#bubble" x="-209" y="346" />
                    <use href="#bubble" x="704" y="346" />
                    <use href="#bubble" y="508" />
                    <use href="#bubble" x="450" y="508" />
                </g>
                <g class="labels">
                    <text x="650" y="184">4</text>
                    <text x="1100" y="184">5</text>
                    <text x="442" y="374">1/A</text>
                    <text x="441" y="530">A</text>
                    <text x="1354" y="530">A</text>
                    <text x="650" y="692">4</text>
                    <text x="1100" y="692">5</text>
                    <text x="463" y="671">6000</text>
                    <text x="875" y="671">7200</text>
                    <text x="1287" y="671">6000</text>
                </g>
                <path d="M479 645V628" stroke="#00ff00" stroke-width="4" />
                <path d="M479 618l5 12h-10z" fill="#00ff00" />
                <path d="M482 648h16" stroke="#ff0000" stroke-width="4" />
                <path d="M509 648l-12-5v10z" fill="#ff0000" />
                <circle cx="479" cy="648" r="6" fill="#0000c0" />
                <g class="axes">
                    <text x="479" y="617" fill="#00ff00">Y</text>
                    <text x="515" y="654" fill="#ff0000">X</text>
                </g>
            </svg>
            <div class="view-tools">
                <button title="动态观察"><svg><use href="#i-orbit" /></svg></button>
                <button title="三维" class="three-d"><svg><use href="#i-cube" /></svg><span>3D</span></button>
                <button title="线框"><svg><use href="#i-cube-wire" /></svg></button>
                <i class="arrow wide"></i>
                <button title="实体"><svg><use href="#i-cube" /></svg></button>
                <i class="arrow wide"></i>
                <button title="旋转"><svg><use href="#i-spin" /></svg></button>
                <i class="arrow wide"></i>
                <hr>
                <button title="显示设置"><svg><use href="#i-options" /></svg></button>
            </div>
        </div>
    </main>

    <footer class="status">
        <span class="coords">X = 14586 Y = 2742</span>
        <span class="pair">层高： <b>3.9</b></span>
        <span class="pair">标高： <b>-3.95~-0.05</b></span>
        <span class="zero">0</span>
        <span class="hidden-count">隐藏：<b>0</b></span>
        <div class="status-btns">
            <button title="正交"><svg class="ico"><use href="#i-ortho" /></svg></button>
            <button title="矩形选择" class="on"><svg class="ico"><use href="#i-snap-rect" /></svg><i class="arrow"></i></button>
            <button title="交点" class="faded"><svg class="ico"><use href="#i-cross" /></svg></button>
            <button title="角度"><svg class="ico"><use href="#i-angle" /></svg><i class="arrow"></i></button>
            <button title="动态输入"><svg class="ico"><use href="#i-input" /></svg><i class="arrow"></i></button>
            <button class="text">跨图层选择</button>
            <button class="text">折线选择</button>
        </div>
        <span class="hint">按鼠标左键指定第一个角点，或拾取构件图元</span>
        <span class="fps">1000 FPS</span>
    </footer>

    <!-- Windows taskbar -->
    <div class="taskbar">
        <button title="开始"><svg class="ico"><use href="#i-win" /></svg></button>
        <button title="Cortana"><svg class="ico"><use href="#i-cortana" /></svg></button>
        <button title="任务视图"><svg class="ico"><use href="#i-taskview" /></svg></button>
        <button title="百度" class="baidu"><svg><use href="#i-baidu" /></svg><span>du</span></button>
        <button title="控制面板"><svg><use href="#i-card" /></svg></button>
        <button title="同步" class="running"><svg><use href="#i-swirl" /></svg></button>
        <button title="Edge" class="running"><svg><use href="#i-edge" /></svg></button>
        <button title="证书" class="running"><svg><use href="#i-cert" /></svg></button>
        <button title="GTJ2018" class="current"><svg><use href="#i-logo" /></svg></button>
        <div class="tray">
            <svg class="ico"><use href="#i-up" /></svg>
            <svg class="ico"><use href="#i-sound" /></svg>
            <span class="ime">英</span>
            <time>11:47<br>2020/7/30</time>
            <svg class="ico"><use href="#i-note" /></svg>
            <i class="peek"></i>
        </div>
    </div>
</body>

</html>
```
FILE: styles.css
```css
* {
    box-sizing: border-box;
}

body {
    margin: 0;
    height: 100vh;
    display: flex;
    flex-direction: column;
    overflow: hidden;
    background-color: #fff;
    color: #111;
    font-family: 'Noto Sans', 'Noto Sans CJK SC', sans-serif;
    font-size: 12px;
    line-height: 16px;
}

button,
input,
select {
    font: inherit;
    color: inherit;
    padding: 0;
    margin: 0;
    border: none;
    background: none;
}

button {
    display: flex;
    align-items: center;
    white-space: nowrap;
}

h1,
h2 {
    margin: 0;
    font-size: 12px;
    font-weight: normal;
}

ul {
    margin: 0;
    padding: 0;
    list-style: none;
}

a {
    color: inherit;
    text-decoration: none;
}

.sprite {
    position: absolute;
    width: 0;
    height: 0;
}

.ico {
    width: 16px;
    height: 16px;
    flex: none;
}

/* Small drop-down triangle */
.arrow {
    flex: none;
    width: 5px;
    height: 3px;
    background-color: #555;
    clip-path: polygon(0 0, 100% 0, 50% 100%);
}

.arrow.wide {
    width: 7px;
    height: 4px;
}

/* Title and tabs */
.header {
    flex: none;
    display: grid;
    grid-template-columns: 50px 1fr;
    grid-template-rows: 21px 20px;
    border-bottom: 1px solid #d4d7da;
}

.titlebar {
    grid-area: 1 / 1 / 2 / 3;
    display: grid;
    grid-template-columns: 1fr auto 1fr;
    align-items: center;
}

.quick {
    display: flex;
    gap: 7px;
    padding-left: 54px;
}

.quick button {
    gap: 3px;
}

.quick .off .arrow {
    background-color: #b5b5b5;
}

.customize {
    padding-left: 2px;
}

.win-btns {
    display: flex;
    justify-content: flex-end;
    gap: 24px;
    padding-right: 13px;
}

.win-btns svg {
    width: 12px;
    height: 12px;
}

.logo {
    grid-area: 1 / 1 / 3 / 2;
    z-index: 1;
    width: 46px;
    justify-content: center;
    border-right: 1px solid #e2e4e6;
}

.logo svg {
    width: 28px;
    height: 28px;
}

.tabbar {
    display: flex;
    align-items: center;
    color: #333;
}

.tabs {
    display: flex;
    align-self: stretch;
    flex: 1;
}

.tabs a {
    padding: 2px 13px;
}

.tabs .active {
    background-color: #5aa5f2;
    color: #fff;
}

.help-search {
    display: flex;
    align-items: center;
    width: 245px;
    height: 17px;
    border: 1px solid #b9bcc0;
    padding: 0 4px 0 1px;
    color: #b0b3b7;
}

.help-search input {
    flex: 1;
    min-width: 0;
    font-size: 11px;
}

input::placeholder {
    color: #a9a9a9;
    opacity: 1;
}

.user-btns {
    display: flex;
    gap: 7px;
    padding: 0 5px 0 9px;
}

.help {
    width: 16px;
}

.help svg {
    width: 11px;
}

/* Ribbon */
.ribbon {
    flex: none;
    display: flex;
    height: 98px;
    background-image: linear-gradient(#fff 30%, #e6eaec);
    border-bottom: 2px solid #90959b;
}

.group {
    display: flex;
    flex-direction: column;
    align-items: center;
    margin: 2px 0 3px;
    padding: 0 11px 0 10px;
    border-right: 1px solid #c5c9cc;
}

.group:first-child {
    padding-left: 8px;
}

.cols {
    display: flex;
    gap: 11px;
    align-items: flex-start;
    flex: 1;
}

.group:first-child .cols {
    gap: 6px;
}

.cols.tight {
    gap: 6px;
}

.col button {
    height: 23px;
    gap: 3px;
}

.col .arrow {
    margin-left: 3px;
}

.big {
    flex-direction: column;
    width: 40px;
    height: 67px;
    margin-top: 2px;
    padding-top: 2px;
    gap: 5px;
}

.big svg {
    width: 30px;
    height: 30px;
}

.tight .big {
    width: 34px;
}

.big.long {
    width: 58px;
    padding-right: 8px;
}

.big.active {
    background-color: #c8d8ee;
}

button:disabled {
    color: #b0b0b0;
}

button:disabled .arrow {
    background-color: #b5b5b5;
}

.group-name {
    display: flex;
    align-items: center;
    gap: 6px;
    height: 20px;
}

.plain .group-name {
    height: 16px;
}

/* Floor and component pickers */
.pickers {
    flex: none;
    display: flex;
    height: 26px;
    padding: 1px 2px;
    background-color: #c9cdd2;
    border-bottom: 1px solid #90959b;
}

.pickers select {
    width: 100px;
    padding: 0 3px;
    border: 1px solid #a5a8ad;
    appearance: none;
    background: #fff url("data:image/svg+xml,%3Csvg xmlns='http://www.w3.org/2000/svg' width='5' height='3'%3E%3Cpath d='M0 0h5L2.5 3z' fill='%23444'/%3E%3C/svg%3E") no-repeat right 5px center;
}

/* Workspace */
.workspace {
    flex: 1;
    min-height: 0;
    display: flex;
}

.panel {
    display: flex;
    flex-direction: column;
    border: 1px solid #bfc2c8;
    min-height: 0;
}

.nav {
    width: 145px;
    flex: none;
}

.strip {
    flex: none;
    height: 12px;
    display: flex;
    justify-content: flex-end;
    align-items: center;
    padding-right: 4px;
    background-color: #d3d5db;
    border-bottom: 1px solid #c6c8cd;
}

.strip button {
    color: #666;
    font-size: 14px;
    line-height: 10px;
}

.nav h2 {
    flex: none;
    height: 21px;
    padding: 2px 8px;
    background-color: #efefef;
    color: #777;
}

.nav-tools {
    flex: none;
    display: flex;
    gap: 4px;
    align-items: center;
    height: 28px;
    padding: 0 1px 0 5px;
    background-color: #efefef;
    border: 1px solid #c6c8cd;
    border-width: 1px 0;
}

.nav-tools button:first-child {
    margin-right: auto;
}

.nav-tools .boxed {
    width: 24px;
    height: 22px;
    justify-content: center;
    border: 1px solid #5ba4ee;
    border-radius: 3px;
    background-color: #e6f1fc;
}

.tree-wrap {
    flex: 1;
    min-height: 0;
    display: flex;
    padding-top: 2px;
    overflow: hidden;
}

.tree {
    display: flex;
    flex-direction: column;
    width: 129px;
    overflow: hidden;
}

.tree li {
    flex: none;
    display: flex;
    align-items: center;
    gap: 5px;
    height: 24px;
    padding-left: 2px;
    white-space: nowrap;
}

.tree .leaf {
    height: 22px;
    margin: 1px 0 1px 40px;
    padding-left: 3px;
    gap: 6px;
}

.tree .selected {
    background-color: #c8d8ee;
}

.vscroll {
    padding: 14px 0 0 3px;
}

.vscroll i {
    display: block;
    width: 8px;
    height: 273px;
    border-radius: 4px;
    background-color: #c8c8c8;
}

.hscroll {
    flex: none;
    padding: 0 0 3px 14px;
}

.hscroll i {
    display: block;
    width: 96px;
    height: 8px;
    border-radius: 4px;
    background-color: #c8c8c8;
}

.middle {
    width: 276px;
    flex: none;
    display: flex;
    flex-direction: column;
    gap: 3px;
    margin-left: 4px;
}

.components {
    flex: 1;
}

.props {
    flex: 1;
}

.panel-tabs {
    flex: none;
    display: flex;
    height: 23px;
    background-color: #efefef;
    border-bottom: 1px solid #c6c8cd;
}

.panel-tabs button {
    padding: 0 8px;
    border-right: 1px solid #c6c8cd;
    background-color: #e0e0e0;
    color: #777;
}

.panel-tabs .active {
    background-color: #f3f3f3;
    color: #111;
    font-weight: 500;
}

.item-tools {
    flex: none;
    display: flex;
    gap: 9px;
    height: 28px;
    padding: 0 3px 0 5px;
    background-color: #efefef;
    border-bottom: 1px solid #c6c8cd;
}

.item-tools button {
    gap: 3px;
}

.item-tools .arrow {
    margin-left: 3px;
}

.item-tools .more {
    margin-left: auto;
}

.item-tools .more svg {
    width: 8px;
    height: 6px;
}

.item-search {
    flex: none;
    display: flex;
    align-items: center;
    height: 19px;
    padding: 0 5px 0 2px;
    border-bottom: 1px solid #c6c8cd;
    color: #3f8fc8;
}

.item-search input {
    flex: 1;
    min-width: 0;
}

.item-search input::placeholder {
    color: #777;
}

.item-search svg {
    width: 14px;
    height: 14px;
}

.items {
    padding-top: 2px;
}

.items li {
    display: flex;
    align-items: center;
    gap: 7px;
    height: 24px;
    padding-left: 10px;
}

.items li svg {
    width: 6px;
    height: 6px;
}

.items .child {
    padding-left: 40px;
}

.items span {
    padding: 2px 5px 3px 3px;
    background-color: #b3cdf0;
}

/* Property table */
.prop-body {
    flex: 1;
    background-image: linear-gradient(90deg, #efefef 22px, transparent 22px);
}

table {
    width: 273px;
    table-layout: fixed;
    border-collapse: collapse;
}

th,
td {
    height: 21px;
    padding: 0 3px;
    border: 1px solid #cfcfd2;
    border-width: 0 1px 1px 0;
    text-align: left;
    font-weight: normal;
}

th {
    background-color: #efefef;
    color: #333;
    text-align: center;
}

.num {
    width: 22px;
}

.name {
    width: 101px;
}

.extra {
    width: 41px;
}

.key {
    color: #0a55e8;
}

.locked {
    background-color: #e9e9e9;
    color: #888;
}

.check {
    text-align: center;
}

.check input {
    width: 14px;
    height: 14px;
    display: block;
    margin: 0 auto;
    appearance: none;
    border: 1px solid #666;
    border-radius: 2px;
}

.expand {
    display: inline-flex;
    justify-content: center;
    width: 13px;
    height: 13px;
    margin-right: 5px;
    border: 1px solid #777;
    border-radius: 2px;
    line-height: 11px;
}

.splitter {
    flex: none;
    display: flex;
    align-items: center;
    width: 4px;
}

.splitter button {
    height: 100px;
    background-color: #5d6672;
}

.splitter svg {
    width: 4px;
    height: 8px;
}

/* Drawing area */
.canvas {
    flex: 1;
    min-width: 0;
    position: relative;
    background-color: #000;
}

.drawing {
    display: block;
    width: 100%;
    height: 100%;
}

.bubbles {
    fill: none;
    stroke: #008000;
}

.labels {
    fill: #fff;
    font-size: 17px;
    text-anchor: middle;
}

.axes {
    font-size: 15px;
    text-anchor: middle;
}

.view-tools {
    position: absolute;
    top: 0;
    right: 1px;
    display: flex;
    flex-direction: column;
    align-items: center;
    width: 32px;
    padding: 10px 0 5px;
    border: 1px solid #c5c7ca;
    background-color: #95989e;
}

.view-tools button {
    margin-bottom: 5px;
}

.view-tools svg {
    width: 24px;
    height: 24px;
}

.view-tools .arrow {
    margin: 0 0 6px;
    background-color: #222e3c;
}

.view-tools hr {
    width: 23px;
    margin: 0 0 5px;
    border: none;
    border-top: 1px solid #666;
}

.three-d {
    position: relative;
}

.three-d span {
    position: absolute;
    right: 7px;
    bottom: 1px;
    font-size: 8px;
    line-height: 10px;
    color: #222e3c;
}

/* Status bar */
.status {
    flex: none;
    display: flex;
    align-items: center;
    height: 30px;
    padding: 2px 29px 0 2px;
    background-color: #dddde0;
    border-bottom: 2px solid #fff;
    color: #333;
    white-space: nowrap;
}

.status b {
    font-weight: normal;
}

.coords {
    width: 263px;
}

.pair {
    margin-right: 26px;
}

.pair b {
    margin-left: 1px;
}

.zero {
    margin-left: 4px;
}

.hidden-count {
    margin-left: 96px;
}

.status-btns {
    display: flex;
    gap: 4px;
    margin-left: auto;
}

.status-btns button {
    height: 25px;
    padding: 0 3px;
    gap: 6px;
    border: 1px solid #939396;
    background-color: #d0d0d3;
}

.status-btns .text {
    padding: 0 5px;
}

.status-btns .on {
    border-color: #3f97f5;
    background-color: #fff;
}

.status-btns .faded {
    margin: 0 3px;
    border-color: #b5b5b8;
}

.hint {
    margin-left: 7px;
}

.fps {
    margin-left: 36px;
}

/* Taskbar */
.taskbar {
    flex: none;
    display: flex;
    gap: 1px;
    height: 40px;
    background-image: linear-gradient(90deg, #333313, #333313 32%, #2e2d10 36%, #2b1e12 44%, #2e290e 52%, #2b1e12 56%, #333313 63%);
    color: #fff;
}

.taskbar button {
    position: relative;
    width: 48px;
    justify-content: center;
}

.taskbar button svg:not(.ico) {
    width: 24px;
    height: 24px;
}

.running::after,
.current::after {
    content: "";
    position: absolute;
    left: 4px;
    right: 4px;
    bottom: 0;
    height: 2px;
    background-color: #76b9ed;
}

.current {
    background-color: #5e5d42;
}

.current::after {
    left: 0;
    right: 0;
}

.baidu span {
    position: absolute;
    bottom: 9px;
    font-size: 8px;
    line-height: 8px;
    font-weight: bold;
}

.tray {
    display: flex;
    align-items: center;
    gap: 8px;
    margin-left: auto;
    padding-right: 4px;
}

.ime {
    font-size: 14px;
}

time {
    padding: 0 12px 0 2px;
    text-align: center;
    line-height: 19px;
}

.peek {
    align-self: stretch;
    margin-left: 12px;
    border-left: 1px solid #77775f;
}
```
